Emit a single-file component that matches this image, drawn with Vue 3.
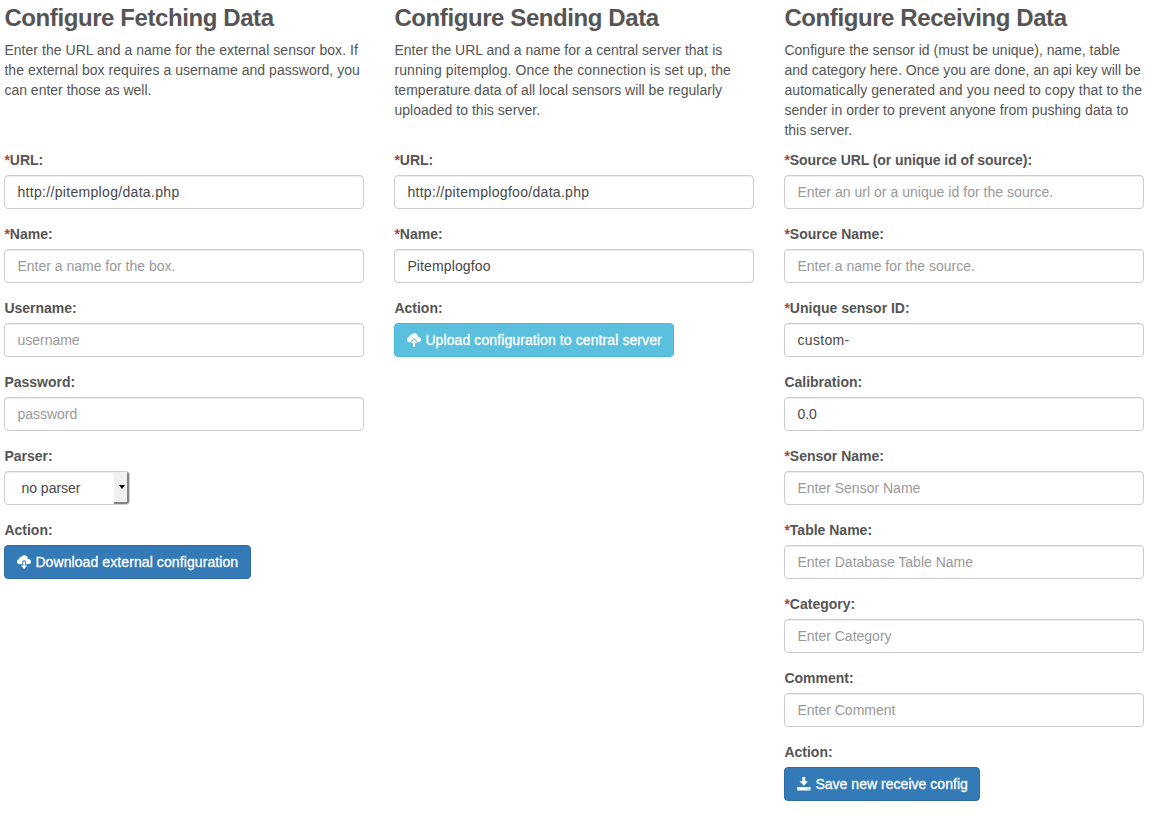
<script setup>
const columns = [
  {
    title: 'Configure Fetching Data',
    lines: [
      ['Enter the URL and a name for the external sensor box. If', 0.04],
      ['the external box requires a username and password, you', 0.04],
      ['can enter those as well.', 0],
    ],
    fields: [
      { label: 'URL:', required: true, value: 'http://pitemplog/data.php', spacing: 0.32 },
      { label: 'Name:', required: true, placeholder: 'Enter a name for the box.' },
      { label: 'Username:', placeholder: 'username' },
      { label: 'Password:', placeholder: 'password' },
      { label: 'Parser:', select: 'no parser' },
    ],
    action: { text: 'Download external configuration', icon: 'cloud-down', kind: 'primary', width: 247, spacing: 0.09 },
  },
  {
    title: 'Configure Sending Data',
    lines: [
      ['Enter the URL and a name for a central server that is', 0],
      ['running pitemplog. Once the connection is set up, the', 0.11],
      ['temperature data of all local sensors will be regularly', 0.03],
      ['uploaded to this server.', 0.04],
    ],
    fields: [
      { label: 'URL:', required: true, value: 'http://pitemplogfoo/data.php', spacing: 0.3 },
      { label: 'Name:', required: true, value: 'Pitemplogfoo', spacing: 0.12 },
    ],
    action: { text: 'Upload configuration to central server', icon: 'cloud-up', kind: 'info', width: 280, spacing: 0.1 },
  },
  {
    title: 'Configure Receiving Data',
    lines: [
      ['Configure the sensor id (must be unique), name, table', 0.02],
      ['and category here. Once you are done, an api key will be', 0.04],
      ['automatically generated and you need to copy that to the', 0.09],
      ['sender in order to prevent anyone from pushing data to', 0.04],
      ['this server.', 0],
    ],
    fields: [
      { label: 'Source URL (or unique id of source):', labelSpacing: -0.07, required: true, placeholder: 'Enter an url or a unique id for the source.', spacing: 0.03 },
      { label: 'Source Name:', required: true, placeholder: 'Enter a name for the source.' },
      { label: 'Unique sensor ID:', required: true, value: 'custom-', spacing: 0.35 },
      { label: 'Calibration:', value: '0.0' },
      { label: 'Sensor Name:', required: true, placeholder: 'Enter Sensor Name' },
      { label: 'Table Name:', required: true, placeholder: 'Enter Database Table Name' },
      { label: 'Category:', required: true, placeholder: 'Enter Category' },
      { label: 'Comment:', placeholder: 'Enter Comment' },
    ],
    action: { text: 'Save new receive config', icon: 'save', kind: 'primary', width: 196, spacing: 0.03 },
  },
]
const tracking = (v) => ({ letterSpacing: (v || 0) + 'px' })
</script>

<template>
  <main class="page">
    <section v-for="col in columns" :key="col.title" class="column">
      <h3>{{ col.title }}</h3>
      <p class="intro">
        <span v-for="[line, ls] in col.lines" :key="line" :style="tracking(ls)">{{ line }}</span>
      </p>
      <div v-for="f in col.fields" :key="f.label" class="group">
        <label :style="tracking(f.labelSpacing)"><i v-if="f.required">*</i>{{ f.label }}</label>
        <div v-if="f.select" class="control select">
          <span>{{ f.select }}</span>
          <b class="drop"></b>
        </div>
        <div v-else class="control" :class="{ empty: !f.value }" :style="tracking(f.spacing)">{{ f.value || f.placeholder }}</div>
      </div>
      <div class="group">
        <label>Action:</label>
        <button :class="col.action.kind" :style="{ width: col.action.width + 'px' }">
          <svg viewBox="0 0 14 14" width="14" height="14" fill="currentColor">
            <template v-if="col.action.icon === 'cloud-down'">
              <path d="M2.700 9.300C1 9.300 0 8.100 0 6.700c0-1.400.8-2.300 1.900-2.500C1.900 2.700 2.900 2 4 2.300 4.700 1 5.800.2 7.200.2c2.200 0 3.800 1.600 3.900 3.700 1.700 0 2.900 1.200 2.900 2.700 0 1.600-1 2.700-2.500 2.700z" />
              <path class="cut" d="M6.300 6.500h1.600v4h2.400L7.100 13.900 3.900 10.500h2.400z" />
              <path d="M6.300 6.500h1.600v4h2.400L7.100 13.900 3.900 10.500h2.400z" />
            </template>
            <template v-else-if="col.action.icon === 'cloud-up'">
              <path d="M2.700 9.300C1 9.300 0 8.100 0 6.700c0-1.400.8-2.300 1.900-2.500C1.900 2.700 2.900 2 4 2.300 4.700 1 5.800.2 7.200.2c2.200 0 3.800 1.600 3.900 3.700 1.700 0 2.900 1.200 2.900 2.700 0 1.600-1 2.700-2.500 2.700z" />
              <path class="cut" d="M7.100 6.300l3.300 3.600H8v4H6.200v-4H3.800z" />
              <path d="M7.100 6.300l3.300 3.600H8v4H6.200v-4H3.800z" />
            </template>
            <path v-else d="M5.300 0h2.900v4.200H11L6.800 8.800 2.500 4.200h2.800zM.3 9.900h13.200v3.600H.3zM10.300 11.400v.9h1.500v-.9z" fill-rule="evenodd" />
          </svg>
          <span :style="tracking(col.action.spacing)">{{ col.action.text }}</span>
        </button>
      </div>
    </section>
  </main>
</template>

<style>
body { margin: 0; background: #fff; }
</style>

<style scoped>
.page {
  display: grid;
  grid-template-columns: repeat(3, 360px);
  gap: 30px;
  padding-left: 4.400px;
  height: 824px;
  box-sizing: border-box;
  overflow: hidden;
  color: #555;
  font: 14px/20px "Liberation Sans", Arial, sans-serif;
}
h3 {
  margin: 0;
  padding-top: 5px;
  height: 35px;
  box-sizing: border-box;
  font-size: 24px;
  line-height: 26px;
  font-weight: 700;
  letter-spacing: -.41px;
  white-space: nowrap;
}
.intro { margin: 5px 0 0; height: 110px; }
.intro span { display: block; white-space: nowrap; }
.group { height: 74px; }
label { display: block; height: 25px; font-weight: 700; white-space: nowrap; }
label i { color: #a94442; font-style: normal; }
.control {
  box-sizing: border-box;
  height: 34px;
  padding: 6px 12px;
  border: 1px solid #ccc;
  border-radius: 4px;
  box-shadow: inset 0 1px 1px rgba(0, 0, 0, .075);
  color: #484848;
  white-space: nowrap;
}
.control.empty { color: #999; }
.select {
  display: flex;
  justify-content: space-between;
  width: 126px;
  padding: 0 0 0 16px;
  line-height: 32px;
}
.drop {
  display: flex;
  align-items: center;
  justify-content: center;
  width: 15px;
  box-sizing: border-box;
  background: #f0f0f0;
  border-right: 2px solid #858585;
  border-bottom: 2px solid #858585;
  border-radius: 0 2px 3px 0;
}
.drop::after {
  content: "";
  margin-left: 2px;
  border: 3.500px solid transparent;
  border-top: 4px solid #000;
  border-bottom: 0;
}
button {
  display: flex;
  align-items: center;
  gap: 4px;
  height: 34px;
  box-sizing: border-box;
  padding: 0 12px;
  border: 1px solid #2e6da4;
  border-radius: 4px;
  background: #337ab7;
  color: #fff;
  font: inherit;
  white-space: nowrap;
  -webkit-text-stroke: .3px #fff;
}
button svg { flex: none; overflow: visible; }
.cut { stroke: #337ab7; stroke-width: 1.800px; }
.info { background: #5bc0de; border-color: #46b8da; }
.info .cut { stroke: #5bc0de; }
</style>
